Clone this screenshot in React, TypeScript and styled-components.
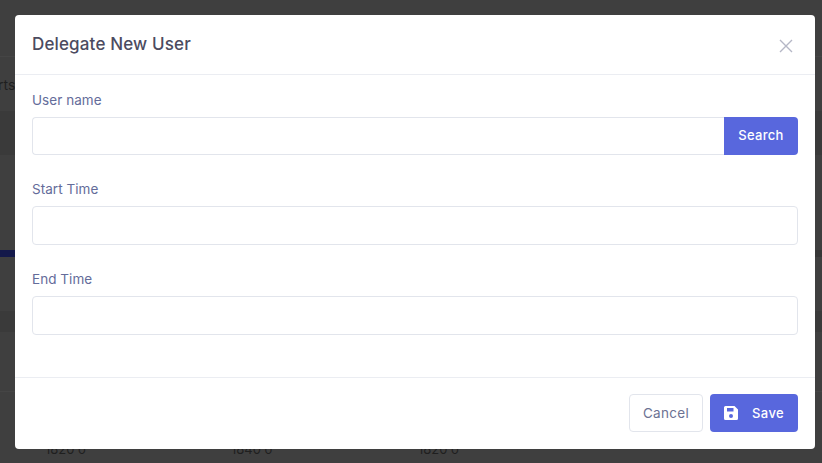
import React from "react";
import styled, { createGlobalStyle } from "styled-components";

const Global = createGlobalStyle`
  html, body { margin: 0; padding: 0; width: 822px; height: 463px; overflow: hidden; background: #3f3f3f; }
  * { box-sizing: border-box; }
  body { font-family: Inter, "Open Sans", "Liberation Sans", sans-serif; }
`;

const Page = styled.div`
  position: relative;
  width: 822px;
  height: 463px;
  background: #3f3f3f;
  overflow: hidden;
`;

const BackdropBand = styled.div<{ $top: number; $height: number; $color: string; $left?: number }>`
  position: absolute;
  left: ${(p) => p.$left ?? 0}px;
  right: 0;
  top: ${(p) => p.$top}px;
  height: ${(p) => p.$height}px;
  background: ${(p) => p.$color};
`;

const BackdropText = styled.span<{ $left: number; $top: number; $size?: number }>`
  position: absolute;
  left: ${(p) => p.$left}px;
  top: ${(p) => p.$top}px;
  font-size: ${(p) => p.$size ?? 13}px;
  line-height: 16px;
  color: #1f1f1f;
`;

const Modal = styled.div`
  position: absolute;
  left: 15px;
  top: 15px;
  width: 800px;
  height: 434px;
  background: #fff;
  border-radius: 4px;
  display: flex;
  flex-direction: column;
`;

const Header = styled.header`
  height: 60px;
  flex: none;
  padding: 0 17px;
  display: flex;
  align-items: center;
  justify-content: space-between;
  border-bottom: 1px solid #ebedf2;
`;

const Title = styled.h5`
  margin: 0 0 2px;
  font-size: 17px;
  font-weight: 500;
  letter-spacing: 0.15px;
  color: #4c4b5f;
`;

const CloseButton = styled.button`
  width: 14px;
  height: 14px;
  padding: 0;
  margin: 2px 5px 0 0;
  border: 0;
  background: none;
  display: flex;
  color: #b5b7c6;
`;

const Body = styled.div`
  flex: 1;
  padding: 16px 17px 0;
  display: flex;
  flex-direction: column;
  gap: 25px;
`;

const Field = styled.div`
  display: flex;
  flex-direction: column;
  gap: 8px;
`;

const Label = styled.label`
  font-size: 13.5px;
  line-height: 19px;
  letter-spacing: 0.05px;
  margin-bottom: -1px;
  color: #646c9a;
`;

const InputRow = styled.div`
  display: flex;
`;

const Input = styled.input<{ $joined?: boolean }>`
  flex: ${(p) => (p.$joined ? "1" : "none")};
  height: ${(p) => (p.$joined ? "38px" : "39px")};
  min-width: 0;
  background: #fff;
  border: 1px solid #e2e5ec;
  border-radius: ${(p) => (p.$joined ? "4px 0 0 4px" : "4px")};
  ${(p) => (p.$joined ? "border-right: 0;" : "")}
`;

const SearchButton = styled.button`
  width: 74px;
  height: 38px;
  padding: 0 0 2px;
  border: 0;
  border-radius: 0 4px 4px 0;
  background: #5867dd;
  color: #fff;
  font: 500 13px Inter, sans-serif;
  letter-spacing: 0.3px;
`;

const Footer = styled.footer`
  height: 72px;
  flex: none;
  padding: 0 17px 1px;
  display: flex;
  align-items: center;
  justify-content: flex-end;
  gap: 7px;
  border-top: 1px solid #ebedf2;
`;

const CancelButton = styled.button`
  width: 74px;
  height: 38px;
  padding: 0;
  background: #fff;
  border: 1px solid #e2e5ec;
  border-radius: 4px;
  color: #6c7293;
  font: 400 13.5px Inter, sans-serif;
  letter-spacing: 0.3px;
`;

const SaveButton = styled.button`
  width: 88px;
  height: 38px;
  padding: 0 0 0 13px;
  background: #5867dd;
  border: 0;
  border-radius: 4px;
  color: #fff;
  font: 500 13px Inter, sans-serif;
  letter-spacing: 0.4px;
  display: flex;
  align-items: center;
  gap: 13px;
`;

export default function App() {
  return (
    <Page>
      <Global />
      <BackdropBand $top={56} $height={1} $color="#454545" />
      <BackdropBand $top={111} $height={44} $color="#3a3a3a" />
      <BackdropBand $top={250} $height={7} $color="#14194a" />
      <BackdropBand $top={250} $height={7} $left={500} $color="#363636" />
      <BackdropBand $top={311} $height={21} $color="#3a3a3a" />
      <BackdropBand $top={391} $height={1} $color="#454545" />
      <BackdropText $left={-2} $top={77} $size={14}>rts</BackdropText>
      <BackdropText $left={45} $top={441}>1820 ö</BackdropText>
      <BackdropText $left={231} $top={441}>1840 ö</BackdropText>
      <BackdropText $left={418} $top={441}>1820 ö</BackdropText>
      <Modal>
        <Header>
          <Title>Delegate New User</Title>
          <CloseButton aria-label="Close">
            <svg width="14" height="14" viewBox="0 0 14 14" fill="none" stroke="currentColor" strokeWidth="1.4">
              <path d="M1 1 L13 13 M13 1 L1 13" />
            </svg>
          </CloseButton>
        </Header>
        <Body>
          <Field>
            <Label>User name</Label>
            <InputRow>
              <Input $joined />
              <SearchButton>Search</SearchButton>
            </InputRow>
          </Field>
          <Field>
            <Label>Start Time</Label>
            <Input />
          </Field>
          <Field>
            <Label>End Time</Label>
            <Input />
          </Field>
        </Body>
        <Footer>
          <CancelButton>Cancel</CancelButton>
          <SaveButton>
            <svg width="16" height="16" viewBox="0 0 16 16" fill="currentColor">
              <path fillRule="evenodd" d="M2.5 1h9L15 4.5v9a1.5 1.5 0 0 1-1.5 1.5h-11A1.5 1.5 0 0 1 1 13.5v-11A1.5 1.5 0 0 1 2.5 1zM4 3v3.5h6.5V3zM8 9a2 2 0 1 0 0 4 2 2 0 0 0 0-4z" />
            </svg>
            Save
          </SaveButton>
        </Footer>
      </Modal>
    </Page>
  );
}
